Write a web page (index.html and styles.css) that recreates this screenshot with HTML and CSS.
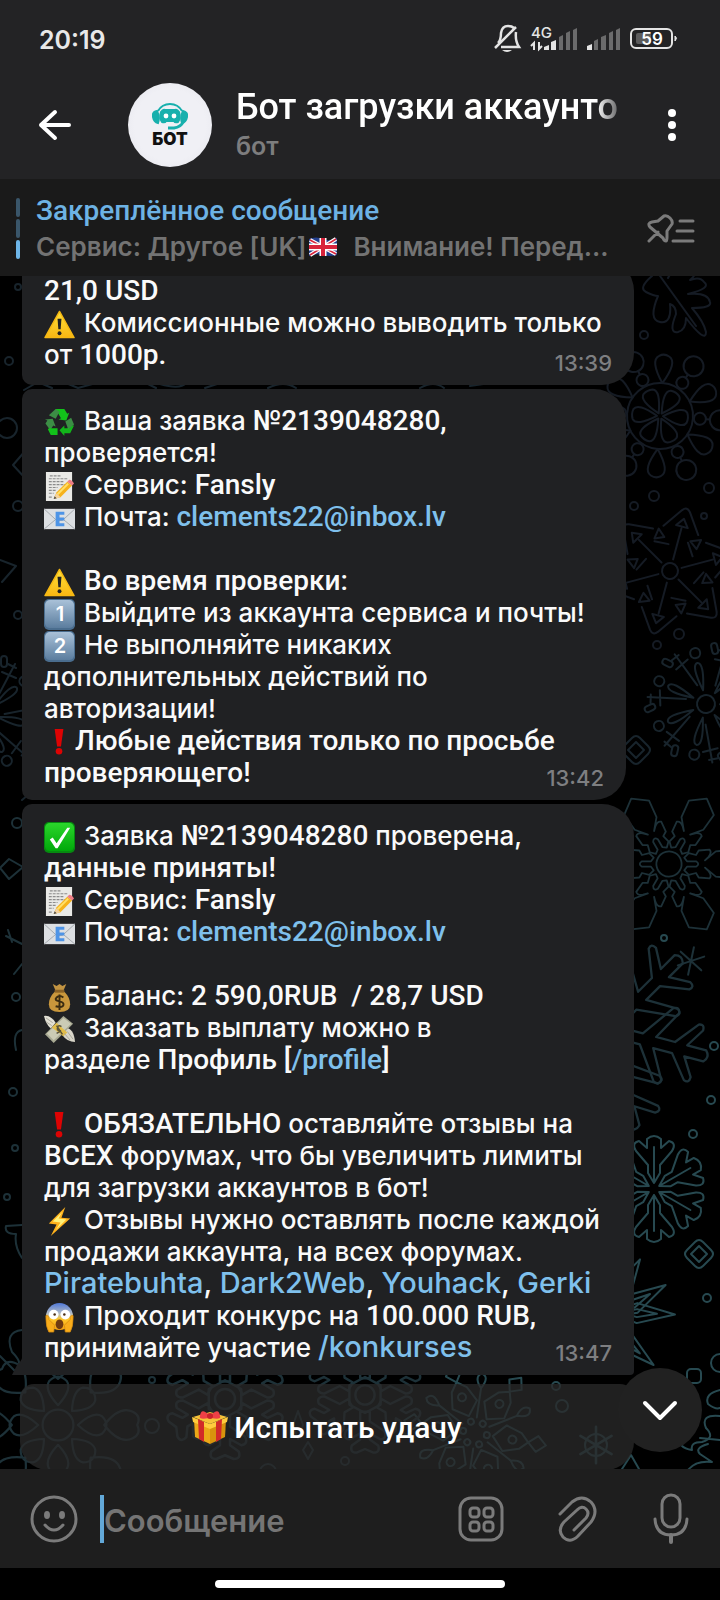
FILE: index.html
```
<!DOCTYPE html>
<html lang="ru">
<head>
    <meta charset="UTF-8">
    <meta name="viewport" content="width=device-width, initial-scale=1.0">
    <title>Бот загрузки аккаунтов</title>
    <link rel="stylesheet" href="styles.css">
</head>
<body>
    <!-- emoji -->
    <svg class="defs" width="0" height="0" aria-hidden="true">
        <defs>
            <linearGradient id="gold" x1="0" y1="0" x2="0" y2="1"><stop offset="0" stop-color="#ffe03a"/><stop offset="1" stop-color="#f8b713"/></linearGradient>
            <linearGradient id="keycap" x1="0" y1="0" x2="0" y2="1"><stop offset="0" stop-color="#a9c1d8"/><stop offset="1" stop-color="#5b7d9e"/></linearGradient>
            <linearGradient id="green" x1="0" y1="0" x2="0" y2="1"><stop offset="0" stop-color="#2bd62b"/><stop offset="1" stop-color="#00a80a"/></linearGradient>
            <linearGradient id="face" x1="0" y1="0" x2="0" y2="1"><stop offset="0" stop-color="#4f78d8"/><stop offset=".4" stop-color="#b7bfc4"/><stop offset=".6" stop-color="#ffc629"/><stop offset="1" stop-color="#f3a011"/></linearGradient>
            <symbol id="e-warn" viewBox="0 0 32 32">
                <path d="M16 2.500L31 29.500H1z" fill="url(#gold)" stroke="#f6b913" stroke-width="1.500" stroke-linejoin="round"/>
                <path d="M14 10h4l-.8 11h-2.400z" fill="#222"/><circle cx="16" cy="25" r="2" fill="#222"/>
            </symbol>
            <symbol id="e-recycle" viewBox="0 0 32 32">
                <path d="M12 2h9l3 5 2-1-3 8-8-1 2.500-1.500z" fill="#12c21a"/><path d="M12 2l4 3-4 7-7-3.500z" fill="#3c8d45"/>
                <path d="M1 13l8-1 3 8-2.500-1-3 5-5-7 2-3z" fill="#3c8d45"/><path d="M5 22h9v7H7l-3-6z" fill="#12c21a"/>
                <path d="M31 19l-4 8h-6v3l-5-6 5-5v3h3l3-3z" fill="#12b61a"/><path d="M22 15l6-4 3 7-6 5z" fill="#3c8d45"/>
            </symbol>
            <symbol id="e-memo" viewBox="0 0 32 32">
                <path d="M2 1h27v30H2z" fill="#e9e9e6"/>
                <path d="M6 5h12M5 8h20M5 11h16M5 14h17M5 17h9M5 20h8M5 23h5M5 27h4" stroke="#8c8c8c" stroke-width="1.200" stroke-dasharray="3 1"/>
                <path d="M10 29l3-7L24 11l5 4-12 12z" fill="#f6b21b"/><path d="M14 24L25 13" stroke="#ffe06a" stroke-width="2"/>
                <path d="M24 11l2-2q3 0 5 4l-2 2z" fill="#ee7d86"/><path d="M10 29l3-6 4 4z" fill="#f4d3a0"/><path d="M10 29l1-3 2 2z" fill="#444"/>
            </symbol>
            <symbol id="e-mail" viewBox="0 0 32 32">
                <path d="M0 6h32v21H0z" fill="#dcdfe2"/><path d="M0 6l13 12h6L32 6M0 27l12-10M32 27L20 17" fill="none" stroke="#a3a8ad"/>
                <path d="M12 9h9v3h-5v3h5v3h-5v3h5v3h-9z" fill="#4e94e6"/>
            </symbol>
            <symbol id="e-key" viewBox="0 0 32 32">
                <rect x="0" y="0" width="32" height="32" rx="5" fill="#4a6d8e"/><rect x="1" y="1" width="30" height="29" rx="5" fill="url(#keycap)"/>
            </symbol>
            <symbol id="e-bang" viewBox="0 0 32 32"><path d="M11 2h9l-2.500 18h-4z" fill="#dd0303"/><circle cx="15.500" cy="25" r="3.400" fill="#dd0303"/></symbol>
            <symbol id="e-check" viewBox="0 0 32 32">
                <rect width="32" height="32" rx="5" fill="#068a10"/><rect x="1" y="1" width="30" height="29" rx="5" fill="url(#green)"/>
                <path d="M6 18l3-2 4 6L24 6h3L14 27h-2z" fill="#fff"/>
            </symbol>
            <symbol id="e-bag" viewBox="0 0 32 32">
                <path d="M9 2l4 2 3-2 3 2 4-2-3 7h-8z" fill="#c29442"/><path d="M11 10h10q6 6 6 13 0 8-11 8T5 23q0-7 6-13z" fill="#c9973c"/>
                <path d="M11 8h10v3H11z" fill="#8a6226"/><path d="M20 16q-4-3-7 0t3 4q5 1 4 4t-8 1M16 13v16" fill="none" stroke="#3a2c12" stroke-width="2"/>
            </symbol>
            <symbol id="e-cash" viewBox="0 0 32 32">
                <path d="M0 2q7-1 12 7L7 15Q2 11 0 2z" fill="#e3e1d5"/><path d="M22 14q9 1 10 15-8 0-13-7z" fill="#d9d6c9"/>
                <path d="M1 21L20 2l10 8-20 20z" fill="#a8a993"/><path d="M3 20L20 4l8 6-18 17z" fill="#cbcbb5"/>
                <path d="M8 14l5-5 11 10-4 4z" fill="#e2bd4a"/><path d="M18 13q-3-2-4 1t2 3-3 3M13 12l6 9" fill="none" stroke="#5b553a" stroke-width="1.600"/>
                <path d="M2 4l7 5M2 8l6 4M24 18l6 8M21 20l6 7" stroke="#a9a89c"/>
            </symbol>
            <symbol id="e-bolt" viewBox="0 0 32 32"><path d="M22 1L5 18l8 1-6 12 20-18-9-1z" fill="#ffb21c"/><path d="M19 6L9 16l8 1-5 8 11-11-8-1z" fill="#fff27a"/></symbol>
            <symbol id="e-scream" viewBox="0 0 32 32">
                <circle cx="16" cy="15" r="14" fill="url(#face)"/><circle cx="10" cy="13" r="5" fill="#fff"/><circle cx="22" cy="13" r="5" fill="#fff"/>
                <circle cx="11" cy="13" r="1.300" fill="#4a2c12"/><circle cx="21" cy="13" r="1.300" fill="#4a2c12"/><ellipse cx="16" cy="23" rx="4" ry="5" fill="#6e3a12"/>
                <path d="M2 17v-3q3-1 3 4l6 6-1 7H5q-3-5-3-14zM30 17v-3q-3-1-3 4l-6 6 1 7h5q3-5 3-14z" fill="#f9ad1b" stroke="#d58a10" stroke-width=".8"/>
            </symbol>
            <symbol id="e-gift" viewBox="0 0 36 36">
                <path d="M1 8l17-5 17 5-17 7z" fill="#f6c338"/><path d="M2 11l16 7v17L3 28z" fill="#eba818"/><path d="M34 11l-16 7v17l15-7z" fill="#d8930d"/>
                <path d="M0 8l18 7v5L1 13zM36 8l-18 7v5l17-7z" fill="#ffcb3d"/><path d="M6 10l6 3v20l-5-3zM30 10l-6 3v20l5-3z" fill="#d22a28"/>
                <path d="M17 6q-8-8-9 1-2 4 9 2zM19 6q8-8 9 1 2 4-9 2z" fill="#ee4046"/><circle cx="18" cy="7" r="3" fill="#c9222c"/>
            </symbol>

            <!-- wallpaper pieces -->
            <path id="drop" d="M0-33q-14-22-5-27 5-3 10 0 9 5-5 27z"/>
            <path id="in" d="M0-3q-12-20-5-24 5-2 10 0 7 4-5 24z"/>
            <g id="ball"><circle cy="-40" r="6"/><circle cy="-60" r="10"/><path d="M0-46v-4"/></g>
            <g id="wheel3"><use href="#drop"/><use href="#drop" transform="rotate(60)"/><use href="#drop" transform="rotate(120)"/><use href="#ball" transform="rotate(30)"/><use href="#ball" transform="rotate(90)"/><use href="#ball" transform="rotate(150)"/><use href="#in" transform="rotate(30)"/><use href="#in" transform="rotate(90)"/><use href="#in" transform="rotate(150)"/></g>
            <g id="wheel"><circle r="33"/><use href="#wheel3"/><use href="#wheel3" transform="rotate(180)"/></g>

            <g id="spike"><path d="M0-12v-32M-18-42l14-20q4-5 8 0l14 20M10-32l8 12M-6-46l6-8 6 8zM12-34l10-4-2 10z"/></g>
            <g id="star3"><use href="#spike"/><use href="#spike" transform="rotate(60)"/><use href="#spike" transform="rotate(120)"/></g>
            <g id="star"><circle r="8"/><use href="#star3"/><use href="#star3" transform="rotate(180)"/></g>

            <g id="ray"><path d="M0-14q-7-27 0-28 7 1 0 28zM13-16l18-34M24-50l8 4M18-42l14 6"/><circle cy="-52" r="5"/><rect x="17" y="-58" width="6" height="11" rx="3"/></g>
            <g id="burst4"><use href="#ray"/><use href="#ray" transform="rotate(51)"/><use href="#ray" transform="rotate(103)"/></g>
            <g id="burst"><circle r="9"/><use href="#burst4"/><use href="#burst4" transform="rotate(154)"/><use href="#ray" transform="rotate(308)"/></g>

            <path id="leaf" d="M-3-20v-10q3-5 6 0v10l4 3 5-5-2-8 5-3 1-12q-3-3-8 1l-4 4 10-12 2-20-16-12-16 12 2 20 10 12-4-4q-5-4-8-1l1 12 5 3-2 8 5 5z"/>
            <g id="crystal3"><use href="#leaf"/><use href="#leaf" transform="rotate(60)"/><use href="#leaf" transform="rotate(120)"/></g>
            <g id="crystal"><circle r="14"/><use href="#crystal3"/><use href="#crystal3" transform="rotate(180)"/></g>

            <path id="arm" d="M0-6v-36M-6-16v-8L-18-38q-5-8 3-10l8 7v-9q7-6 14 0v9l8-7q8 2 3 10L6-24v8L0-6z"/>
            <g id="flake3"><use href="#arm"/><use href="#arm" transform="rotate(60)"/><use href="#arm" transform="rotate(120)"/></g>
            <g id="flake"><use href="#flake3"/><use href="#flake3" transform="rotate(180)"/></g>

            <path id="branch" d="M-5-12v-18l-28-20q-3-5 3-6l25 14v-17l-20-16q-2-5 4-5l16 10v-17q5-5 10 0v17l16-10q6 0 4 5L5-59v17l25-14q6 1 3 6L5-30v18z"/>
            <g id="fir3"><use href="#branch"/><use href="#branch" transform="rotate(60)"/><use href="#branch" transform="rotate(120)"/></g>
            <g id="fir"><use href="#fir3"/><use href="#fir3" transform="rotate(180)"/></g>

            <path id="petal" d="M0-18q-13-14-8-22 8-8 16 0 5 8-8 22zM0-42q-18-14-12-26 4-8 12-4 8-4 12 4 6 12-12 26z"/>
            <g id="bloom4"><use href="#petal"/><use href="#petal" transform="rotate(45)"/><use href="#petal" transform="rotate(90)"/><use href="#petal" transform="rotate(135)"/></g>
            <g id="bloom"><circle r="14"/><use href="#bloom4"/><use href="#bloom4" transform="rotate(180)"/></g>

            <path id="twig" d="M-4-14v-8l-12-8q-3-6 3-7l9 5v-5l-7-5q-2-6 4-6l7 3 7-3q6 0 4 6l-7 5v5l9-5q6 1 3 7L4-22v8z"/>
            <g id="hex3"><use href="#twig"/><use href="#twig" transform="rotate(60)"/><use href="#twig" transform="rotate(120)"/></g>
            <g id="hex"><circle r="8"/><path d="M0-15l13 7V8L0 15-13 8V-8z"/><use href="#hex3"/><use href="#hex3" transform="rotate(180)"/></g>

            <g id="kite"><circle cy="-12" r="3"/><circle cy="-38" r="4"/><path d="M0-18l-13-12 5-16 8-8 8 8 5 16zM0-54l-8-9 8-9 8 9zM7-14l14-26q-3-12 5-14 8 6-5 14"/></g>
            <g id="kite3"><use href="#kite"/><use href="#kite" transform="rotate(60)"/><use href="#kite" transform="rotate(120)"/></g>
            <g id="kites"><use href="#kite3"/><use href="#kite3" transform="rotate(180)"/></g>

            <g id="dia"><path d="M-4-12q4-4 8 0l8 8q4 4 0 8l-8 8q-4 4-8 0l-8-8q-4-4 0-8z"/><path d="M0-8l8 8-8 8-8-8z"/></g>
            <path id="spark" d="M0-14V14M-12-7L12 7M-12 7L12-7"/>
            <path id="thorn" d="M0-6l-10-26L0-70l10 38zM0-16l-4-16 4-20 4 20z"/>
        </defs>
    </svg>

    <header class="top">
        <div class="status">
            <time class="clock">20:19</time>
            <svg width="190" height="34" viewBox="0 0 190 34" fill="none" aria-label="4G, 59%">
                <path d="M5 20q3-3 3-10Q9 3 15 3q4 0 6 2M23 9q-1 9 3 15H8M2 25L23 4" stroke="#e4e4e4" stroke-width="2.500"/>
                <path d="M9 27h10q-5 4-10 0z" fill="#e4e4e4"/>
                <text x="38" y="15" class="net">4G</text>
                <path d="M41 27v-7l-3 3M46 19v7l3-3" stroke="#e4e4e4" stroke-width="2"/>
                <path d="M51 27v-3l5-2v5zM58 27v-8l5-2v10z" fill="#e4e4e4"/>
                <path d="M66 27V14l4-2v15zM73 27v-17l4-2v19zM80 27V7l4-2v22z" fill="#6b6b6c"/>
                <path d="M94 27v-4l5-2v6z" fill="#e4e4e4"/>
                <path d="M101 27v-9l4-2v11zM108 27V14l5-2v15zM116 27v-17l4-2v19zM123 27V7l4-2v22z" fill="#6b6b6c"/>
                <rect x="138" y="6" width="41" height="19" rx="5" stroke="#e4e4e4" stroke-width="2"/>
                <rect x="143" y="10" width="15" height="11" rx="2" fill="#5c5c5d"/><path d="M182 13q3 2 0 5z" fill="#e4e4e4" stroke="#e4e4e4"/>
                <text x="159" y="22" class="charge">59</text>
            </svg>
        </div>
        <div class="bar">
            <button class="icon" aria-label="Назад">
                <svg width="34" height="32" viewBox="0 0 34 32" fill="none" stroke="#fff" stroke-width="4" stroke-linecap="round" stroke-linejoin="round"><path d="M31 16H3M17 3L3 16l14 13"/></svg>
            </button>
            <div class="avatar">
                <svg width="36" height="28" viewBox="0 0 36 28" fill="none" stroke="#18b0ad" stroke-width="2"><path d="M6 9Q10 2 18 2t12 7" /><path d="M5 9Q0 10 1 15t5 6q2-6-1-12zM31 9q5 1 4 6t-5 6q-2-6 1-12z" fill="#18b0ad"/><path d="M9 10q2-3 4-2h10q2-1 4 2 2 6-1 10-3 1-4-1h-8q-1 2-4 1-3-4-1-10z" fill="#18b0ad"/><path d="M31 20q-2 5-9 6h-6" stroke-width="3"/><g fill="#fff" stroke="none"><circle cx="14" cy="14" r="2.400"/><circle cx="22" cy="14" r="2.400"/></g></svg>
                <span>БОТ</span>
            </div>
            <div class="who">
                <h1>Бот загрузки аккаунто</h1>
                <p>бот</p>
            </div>
            <button class="icon" aria-label="Меню">
                <svg width="8" height="34" viewBox="0 0 8 34" fill="#fff"><circle cx="4" cy="5" r="4"/><circle cx="4" cy="17" r="4"/><circle cx="4" cy="29" r="4"/></svg>
            </button>
        </div>
    </header>

    <section class="pinned">
        <div class="steps"><i></i><i></i><i class="on"></i></div>
        <div class="pin-text">
            <h2>Закреплённое сообщение</h2>
            <p>Сервис: Другое [UK]<svg class="flag" width="28" height="20" viewBox="0 0 28 20" role="img" aria-label="UK"><path d="M0 2q7-3 14 0t14-1v17q-7 2-14 0T0 19z" fill="#24408e"/><path d="M1 3l26 14M27 2L1 18" stroke="#fff" stroke-width="4"/><path d="M1 3l26 14M27 2L1 18" stroke="#d8243c" stroke-width="1.500"/><path d="M14 1v18M0 10h28" stroke="#fff" stroke-width="7"/><path d="M14 1v18M0 10h28" stroke="#d8243c" stroke-width="4"/></svg>&nbsp; Внимание! Перед...</p>
        </div>
        <button class="icon" aria-label="Список закреплённых">
            <svg width="50" height="30" viewBox="0 0 50 30" fill="none" stroke="#7b7b7b" stroke-width="3" stroke-linecap="round" stroke-linejoin="round"><path d="M3 27l9-9M20 27q-2 0-3-3L4 13q-3-4 2-5l6-1 6-5q3-1 6 2t2 6l-5 7v6q0 4-1 4zM34 7h13M31 17h16M27 27h20"/></svg>
        </button>
    </section>

    <main class="chat">
        <svg class="wallpaper" viewBox="0 276 720 1193" preserveAspectRatio="xMidYMid slice" aria-hidden="true">
            <g class="tone-a">
                <path d="M660 276l36 50M652 276q-14 12-6 16 8 4 12 4-10 24 2 26 12 2 10-18 6 2 6 10-8 20 2 18 8-2 8-14 20 26 20 14-2-10-14-24 20 0 18-6-2-10-22-8 24-6 16-12-4-6-14-2 10-8-2-10-14-4-20 8"/>
                <use href="#wheel" transform="translate(660 416) rotate(4)"/>
                <use href="#star" transform="translate(670 571) rotate(15)"/>
                <circle cx="644" cy="335" r="4"/><circle cx="654" cy="496" r="5"/><circle cx="634" cy="506" r="4"/><circle cx="709" cy="488" r="5"/><circle cx="704" cy="516" r="3"/><circle cx="679" cy="634" r="5"/><circle cx="657" cy="645" r="4"/>
            </g>
            <g class="tone-b">
                <use href="#burst" transform="translate(706 704) rotate(-12)"/>
                <use href="#dia" transform="translate(636 750)"/>
                <use href="#burst" transform="translate(-16 714)"/>
                <circle cx="18" cy="287" r="3"/><circle cx="9" cy="361" r="4"/><circle cx="7" cy="428" r="10"/><path d="M26 450L13 465l13 14M0 560l16 6-14 16M22 800l6-5 14 0M24 390l14-8 14 6M66 383l12 5 18-5M146 383l10 5M160 384q20 6 26-1M205 388l12-4M268 388q16-8 28 0M420 388q14-8 24 0M470 386l20-3"/>
                <circle cx="18" cy="506" r="5"/><circle cx="18" cy="615" r="4"/>
            </g>
            <g class="tone-c">
                <use href="#crystal" transform="translate(669 864) rotate(30) scale(.900)"/>
                <use href="#spark" transform="translate(691 961) rotate(12)"/>
                <circle cx="17" cy="823" r="5"/><path d="M0 868l9-9 14 8-14 12zM6 936l16 8M8 930l4 12M22 964l-8 10M22 1030q-10 2-6 20"/>
                <circle cx="16" cy="997" r="4"/><circle cx="13" cy="1092" r="4"/><circle cx="15" cy="1148" r="3"/><circle cx="7" cy="1197" r="3"/><path d="M22 1225l-16 1q-2 8 10 8-2 12 6 24M22 1330q-18 2-10 22 10 10 6 14M0 1356l18 18"/>
                <use href="#fir" transform="translate(608 1030) rotate(45) scale(1.150)"/>
            </g>
            <g class="tone-d">
                <use href="#flake" transform="translate(654 1189)"/>
                <use href="#dia" transform="translate(699 1254)"/>
                <use href="#thorn" transform="translate(605 1320) rotate(30)"/><use href="#thorn" transform="translate(605 1320) rotate(60)"/><use href="#thorn" transform="translate(605 1312) rotate(92)"/><use href="#thorn" transform="translate(600 1320) rotate(130)"/>
                <circle cx="664" cy="938" r="3"/><circle cx="714" cy="1046" r="4"/><circle cx="711" cy="1100" r="4"/><circle cx="693" cy="1134" r="4"/><circle cx="707" cy="1298" r="4"/>
                <rect x="687" y="1369" width="14" height="14" rx="4"/><circle cx="720" cy="1363" r="9"/>
                <path d="M720 1390q-16 4-12 14 8 6 12 4M720 1416q-20-2-14 12 10 10-4 14-12 0-10 8-14-2-14-14M720 1440l-20-2M708 1444q-14 4-8 10l12 8q-16-2-24 8M622 1469l9-14 8 14"/>
                <use href="#kites" transform="translate(475 1433) rotate(40)"/>
                <circle cx="596" cy="1445" r="11"/><use href="#spark" transform="translate(596 1445) scale(1.300)"/><circle cx="556" cy="1386" r="4"/><circle cx="562" cy="1406" r="6"/>
            </g>
            <g class="tone-c">
                <use href="#bloom" transform="translate(58 1425) scale(1.100)"/>
                <use href="#hex" transform="translate(225 1399) scale(1.250)"/>
                <circle cx="152" cy="1426" r="7"/><circle cx="345" cy="1461" r="4"/><circle cx="152" cy="1380" r="3"/><path d="M298 1411l5 14-5 14-5-14zM308 1442l5 8-5 9-5-9z"/>
                <use href="#hex" transform="translate(365 1395) scale(1.200)"/>
                <circle cx="268" cy="1472" r="8"/>
            </g>
        </svg>

        <article class="msg first">
            <p><span class="rb">21,0 USD</span><br>
            <svg class="em"><use href="#e-warn"/></svg>Комиссионные можно выводить только<br>
            от <span class="rb">1000р.</span></p>
            <time>13:39</time>
        </article>

        <article class="msg short">
            <p><svg class="em"><use href="#e-recycle"/></svg>Ваша заявка <span class="rb">№2139048280,</span><br>
            проверяется!<br>
            <svg class="em"><use href="#e-memo"/></svg>Сервис: <span class="rb">Fansly</span><br>
            <svg class="em"><use href="#e-mail"/></svg>Почта: <a class="rb" href="mailto:clements22@inbox.lv">clements22@inbox.lv</a></p>
            <p><svg class="em"><use href="#e-warn"/></svg><span class="rb">Во время проверки:</span><br>
            <svg class="em"><use href="#e-key"/><text class="digit" x="16" y="22">1</text></svg>Выйдите из аккаунта сервиса и почты!<br>
            <svg class="em"><use href="#e-key"/><text class="digit" x="16" y="22">2</text></svg>Не выполняйте никаких<br>
            дополнительных действий по<br>
            авторизации!<br>
            <svg class="em tight"><use href="#e-bang"/></svg><span class="rb">Любые действия только по просьбе</span><br>
            <span class="rb">проверяющего!</span></p>
            <time>13:42</time>
        </article>

        <article class="msg last">
            <p><svg class="em"><use href="#e-check"/></svg>Заявка <span class="rb">№2139048280</span> проверена,<br>
            <span class="rb">данные приняты!</span><br>
            <svg class="em"><use href="#e-memo"/></svg>Сервис: <span class="rb">Fansly</span><br>
            <svg class="em"><use href="#e-mail"/></svg>Почта: <a class="rb" href="mailto:clements22@inbox.lv">clements22@inbox.lv</a></p>
            <p><svg class="em"><use href="#e-bag"/></svg>Баланс: <span class="rb">2 590,0RUB&nbsp; / 28,7 USD</span><br>
            <svg class="em"><use href="#e-cash"/></svg>Заказать выплату можно в<br>
            разделе <span class="rb">Профиль [<a href="#profile">/profile</a>]</span></p>
            <p><svg class="em"><use href="#e-bang"/></svg><span class="rb">ОБЯЗАТЕЛЬНО</span> оставляйте отзывы на<br>
            <span class="rb">ВСЕХ</span> форумах, что бы увеличить лимиты<br>
            для загрузки аккаунтов в бот!<br>
            <svg class="em"><use href="#e-bolt"/></svg>Отзывы нужно оставлять после каждой<br>
            продажи аккаунта, на всех форумах.<br>
            <span class="lt"><a href="#piratebuhta">Piratebuhta</a>, <a href="#dark2web">Dark2Web</a>, <a href="#youhack">Youhack</a>, <a href="#gerki">Gerki</a></span><br>
            <svg class="em"><use href="#e-scream"/></svg>Проходит конкурс на <span class="rb">100.000 RUB,</span><br>
            принимайте участие <a class="lt" href="#konkurses">/konkurses</a></p>
            <time>13:47</time>
        </article>

        <button class="luck"><svg width="36" height="36"><use href="#e-gift"/></svg>Испытать удачу</button>
        <button class="down" aria-label="Вниз">
            <svg width="36" height="22" viewBox="0 0 36 22" fill="none" stroke="#fff" stroke-width="4" stroke-linecap="round" stroke-linejoin="round"><path d="M3 4l15 15L33 4"/></svg>
        </button>
    </main>

    <form class="composer">
        <button type="button" class="icon" aria-label="Эмодзи">
            <svg width="48" height="48" viewBox="0 0 48 48" fill="none" stroke="#7b7b7b" stroke-width="3" stroke-linecap="round"><circle cx="24" cy="24" r="22"/><path d="M15 30q9 10 18 0"/><g fill="#7b7b7b" stroke="none"><ellipse cx="17" cy="20" rx="3" ry="4"/><ellipse cx="32" cy="20" rx="3" ry="4"/></g></svg>
        </button>
        <input type="text" placeholder="Сообщение" aria-label="Сообщение">
        <button type="button" class="icon" aria-label="Команды">
            <svg width="46" height="46" viewBox="0 0 46 46" fill="none" stroke="#7b7b7b" stroke-width="3"><rect x="2" y="2" width="42" height="42" rx="11"/><rect x="12" y="12" width="9" height="9" rx="3"/><rect x="26" y="12" width="9" height="9" rx="3"/><rect x="12" y="26" width="9" height="9" rx="3"/><rect x="26" y="26" width="9" height="9" rx="3"/></svg>
        </button>
        <button type="button" class="icon" aria-label="Прикрепить">
            <svg width="40" height="46" viewBox="0 0 40 46" fill="none" stroke="#7b7b7b" stroke-width="3" stroke-linecap="round"><path d="M2 18L14 6q10-8 19 0 8 9 0 20L20 40q-8 8-15 1-6-7 1-15l13-12q5-5 9-1t0 9L16 34"/></svg>
        </button>
        <button type="button" class="icon" aria-label="Голосовое сообщение">
            <svg width="38" height="52" viewBox="0 0 38 52" fill="none" stroke="#7b7b7b" stroke-width="3" stroke-linecap="round"><rect x="10" y="2" width="18" height="32" rx="9"/><path d="M3 26q1 16 16 16t16-16"/><path d="M19 42v7" stroke-width="4"/></svg>
        </button>
    </form>
    <footer><span></span></footer>
</body>
</html>
```
FILE: styles.css
```
* {
    box-sizing: border-box;
}
body {
    margin: 0;
    height: 100vh;
    display: flex;
    flex-direction: column;
    background-color: #000;
    color: #fafafa;
    font-family: Inter, "Noto Sans", sans-serif;
    font-weight: 500;
}
h1, h2, p {
    margin: 0;
    font-weight: 500;
}
button {
    border: none;
    padding: 0;
    background: none;
    color: inherit;
    font-family: inherit;
}
a {
    color: #7fc0ec;
    text-decoration: none;
}
svg {
    display: block;
}
.defs {
    position: absolute;
}
.icon {
    flex: none;
}

/* header */
.top {
    flex: none;
    height: 181px;
    background-color: #232325;
    border-bottom: 2px solid #1a1a1a;
}
.status {
    height: 70px;
    padding: 10px 37px 0 39px;
    display: flex;
    align-items: center;
    justify-content: space-between;
}
.clock {
    font-size: 25px;
    font-weight: 600;
    color: #e8e8e8;
}
.net {
    font-size: 15px;
    fill: #e4e4e4;
}
.charge {
    font-size: 17px;
    font-weight: 600;
    fill: #fff;
    text-anchor: middle;
}
.bar {
    height: 109px;
    padding: 0 44px 0 38px;
    display: flex;
    align-items: center;
}
.avatar {
    flex: none;
    width: 84px;
    height: 84px;
    margin: 0 24px 0 56px;
    border-radius: 50%;
    background: radial-gradient(circle, #f0f0f5 60%, #e3e3ea 100%);
    display: flex;
    flex-direction: column;
    align-items: center;
    justify-content: center;
    color: #111;
}
.avatar span {
    font-size: 17px;
    line-height: 18px;
    font-weight: 900;
}
.who {
    flex: 1;
    min-width: 0;
    margin-right: 40px;
}
.who h1 {
    font-family: Roboto, sans-serif;
    font-size: 36px;
    line-height: 42px;
    color: #fff;
    white-space: nowrap;
    overflow: hidden;
    -webkit-mask-image: linear-gradient(to left, transparent, #000 32px);
    mask-image: linear-gradient(to left, transparent, #000 32px);
}
.who p {
    font-size: 25px;
    line-height: 36px;
    font-weight: 600;
    color: #7d7d7e;
}

/* pinned message */
.pinned {
    flex: none;
    height: 95px;
    padding: 0 24px 0 16px;
    display: flex;
    align-items: center;
    background-color: #1a1a1a;
}
.steps {
    flex: none;
    width: 4px;
    margin-right: 16px;
    display: grid;
    gap: 2px;
}
.steps i {
    height: 19px;
    border-radius: 2px;
    background-color: #3a566a;
}
.steps .on {
    background-color: #6db5e8;
}
.pin-text {
    flex: 1;
    min-width: 0;
    margin-right: 24px;
}
.pin-text h2 {
    font-family: Roboto, sans-serif;
    font-size: 28px;
    line-height: 36px;
    color: #6db2e4;
}
.pin-text p {
    font-size: 26px;
    line-height: 36px;
    font-weight: 600;
    color: #737373;
    white-space: nowrap;
}
.flag {
    display: inline-block;
    margin: 0 3px;
    vertical-align: -1px;
}

/* chat */
.chat {
    position: relative;
    flex: 1;
    min-height: 0;
    overflow: hidden;
    display: flex;
    flex-direction: column;
    justify-content: flex-end;
    gap: 4px;
    padding-left: 22px;
}
.wallpaper {
    position: absolute;
    top: 0;
    left: 0;
    width: 100%;
    height: 100%;
    fill: none;
    stroke-width: 2;
    stroke-linejoin: round;
    stroke-linecap: round;
}
.tone-a {
    stroke: #151b24;
}
.tone-b {
    stroke: #18242c;
}
.tone-c {
    stroke: #1d3138;
}
.tone-d {
    stroke: #274950;
}
.msg {
    position: relative;
    flex: none;
    width: 612px;
    max-width: 94%;
    padding: 16px 22px 11px;
    border-radius: 10px 32px 32px 10px;
    background-color: #202123;
}
.msg.first {
    padding-bottom: 14px;
}
.msg.short {
    width: 604px;
}
.msg.last {
    border-radius: 10px 32px 4px 0;
}
.msg.last::before {
    content: "";
    position: absolute;
    left: -10px;
    bottom: 0;
    width: 10px;
    height: 20px;
    background: radial-gradient(circle at 0 0, transparent 10px, #202123 11px);
    clip-path: polygon(100% 0, 100% 100%, 0 100%);
}
.msg p {
    font-size: 26px;
    line-height: 32px;
    font-weight: 550;
    white-space: nowrap;
}
.msg p + p {
    margin-top: 32px;
}
.msg time {
    position: absolute;
    right: 22px;
    bottom: 10px;
    font-size: 22px;
    line-height: 24px;
    color: #7e7f81;
}
.rb {
    font-family: Roboto, sans-serif;
    font-size: 28px;
    line-height: 28px;
    font-weight: 500;
}
.lt {
    font-size: 29px;
    line-height: 28px;
    font-weight: 500;
}
.em {
    display: inline-block;
    width: 31px;
    height: 31px;
    margin: -4px 9px -4px 0;
    vertical-align: -4px;
}
.em.tight {
    margin-right: 0;
}
.digit {
    font-size: 20px;
    font-weight: 600;
    fill: #fff;
    text-anchor: middle;
}
.luck {
    position: relative;
    flex: none;
    width: 614px;
    max-width: 94%;
    height: 86px;
    margin: 5px 0 -1px -2px;
    border-radius: 14px 14px 28px 28px;
    background-color: rgba(42, 42, 42, 0.76);
    color: #fff;
    font-family: Roboto, sans-serif;
    font-size: 30px;
    font-weight: 500;
    display: flex;
    align-items: center;
    justify-content: center;
    gap: 6px;
}
.down {
    position: absolute;
    right: 18px;
    bottom: 17px;
    width: 84px;
    height: 84px;
    border-radius: 50%;
    background-color: #212121;
    display: flex;
    align-items: center;
    justify-content: center;
}

/* message input */
.composer {
    flex: none;
    height: 99px;
    padding: 0 30px;
    display: flex;
    align-items: center;
    background-color: #1e1e1e;
}
.composer input {
    flex: 1;
    min-width: 0;
    height: 48px;
    margin: 0 24px 0 22px;
    padding: 4px 0 0;
    border: none;
    border-left: 4px solid #62a8d8;
    background: none;
    color: #fff;
    font: 600 31px Inter, "Noto Sans", sans-serif;
    outline: none;
}
.composer input::placeholder {
    color: #757575;
    opacity: 1;
}
.composer .icon + .icon {
    margin-left: 54px;
}
footer {
    flex: none;
    height: 32px;
    display: flex;
    align-items: center;
    justify-content: center;
}
footer span {
    width: 290px;
    height: 8px;
    border-radius: 4px;
    background-color: #fff;
}
```
